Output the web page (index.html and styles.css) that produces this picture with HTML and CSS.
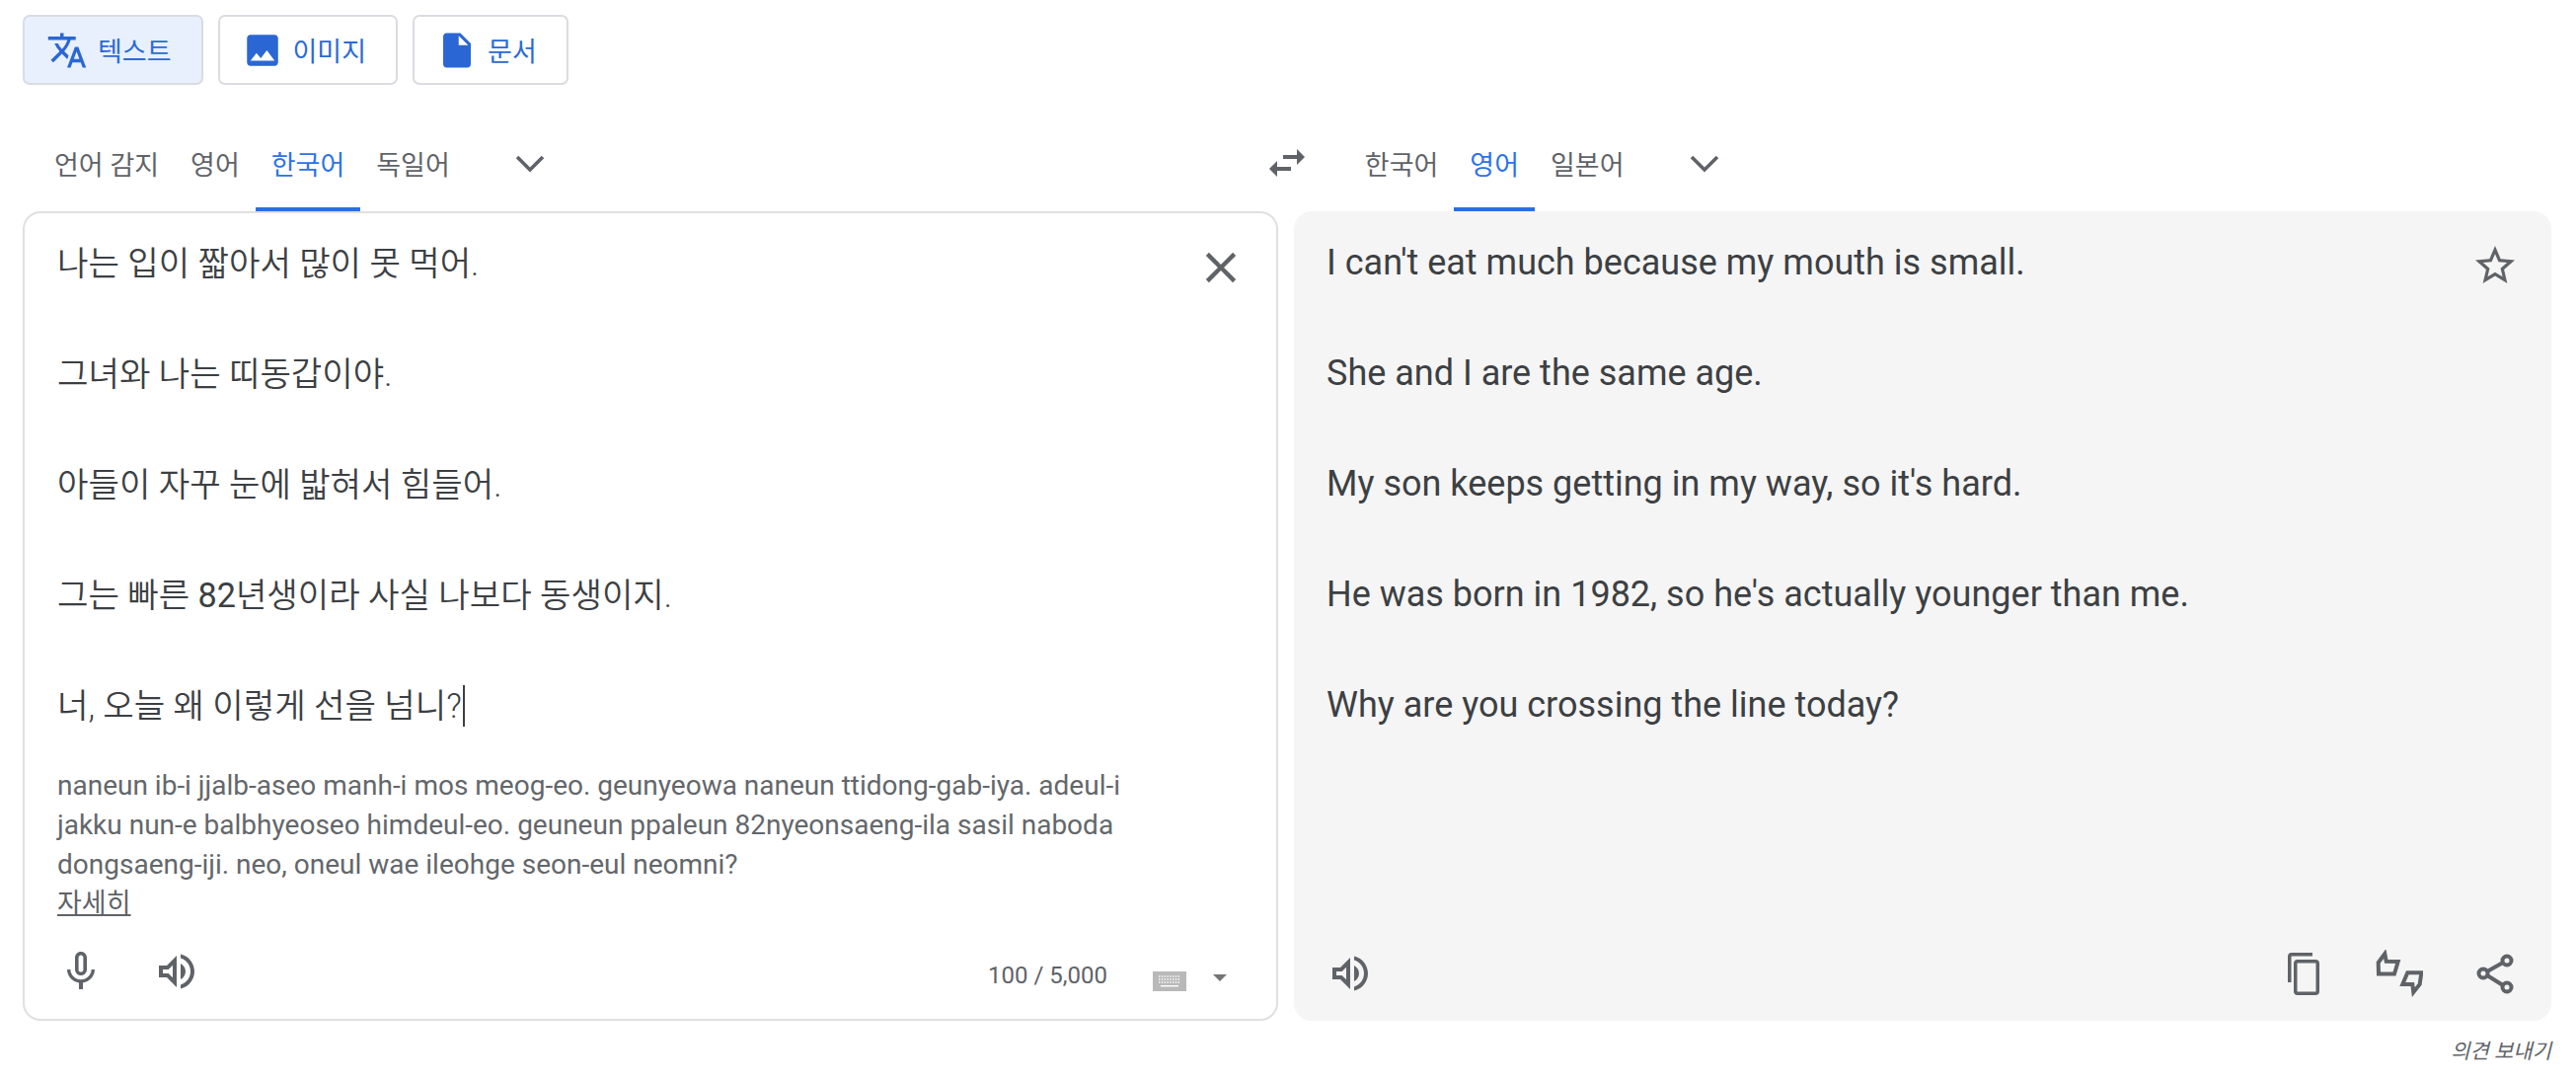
FILE: index.html
```html
<!DOCTYPE html>
<html lang="ko">
<head>
    <meta charset="UTF-8">
    <title>번역</title>
    <link rel="stylesheet" href="styles.css">
</head>
<body>
    <div class="page">
        <div class="modes">
            <div class="mode active">
                <svg class="mode-icon" viewBox="0 0 24 24"><path d="M12.87 15.07l-2.54-2.51.03-.03c1.74-1.94 2.98-4.17 3.71-6.53H17V4h-7V2H8v2H1v1.99h11.17C11.5 7.92 10.44 9.75 9 11.35 8.07 10.32 7.3 9.19 6.69 8h-2c.73 1.63 1.73 3.17 2.98 4.56l-5.09 5.02L4 19l5-5 3.11 3.11.76-2.04zM18.5 10h-2L12 22h2l1.12-3h4.75L21 22h2l-4.5-12zm-2.62 7l1.62-4.33L19.12 17h-3.24z"/></svg>
                <span>텍스트</span>
            </div>
            <div class="mode">
                <svg class="mode-icon" viewBox="0 0 24 24"><path d="M21 19V5c0-1.1-.9-2-2-2H5c-1.1 0-2 .9-2 2v14c0 1.1.9 2 2 2h14c1.1 0 2-.9 2-2zM8.5 13.5l2.5 3.01L14.5 12l4.5 6H5l3.5-4.5z"/></svg>
                <span>이미지</span>
            </div>
            <div class="mode">
                <svg class="mode-icon" viewBox="0 0 24 24"><path d="M6 2c-1.1 0-1.99.9-1.99 2L4 20c0 1.1.89 2 1.99 2H18c1.1 0 2-.9 2-2V8l-6-6H6zm7 7V3.5L18.5 9H13z"/></svg>
                <span>문서</span>
            </div>
        </div>

        <div class="lang-row">
            <div class="tab">언어 감지</div>
            <div class="tab">영어</div>
            <div class="tab selected">한국어</div>
            <div class="tab">독일어</div>
            <svg class="chevron" viewBox="0 0 48 48"><path d="M11 17l13 13 13-13"/></svg>
            <svg class="icon swap" viewBox="0 0 24 24"><path d="M6.99 11L3 15l3.99 4v-3H14v-2H6.99v-3zM21 9l-3.99-4v3H10v2h7.01v3L21 9z"/></svg>
            <div class="tab">한국어</div>
            <div class="tab selected">영어</div>
            <div class="tab">일본어</div>
            <svg class="chevron" viewBox="0 0 48 48"><path d="M11 17l13 13 13-13"/></svg>
        </div>

        <div class="panels">
            <div class="panel source">
                <div class="main-text">
                    <p>나는 입이 짧아서 많이 못 먹어.</p>
                    <p>그녀와 나는 띠동갑이야.</p>
                    <p>아들이 자꾸 눈에 밟혀서 힘들어.</p>
                    <p>그는 빠른 <span class="digits">82</span>년생이라 사실 나보다 동생이지.</p>
                    <p>너, 오늘 왜 이렇게 선을 넘니?<span class="caret-line"></span></p>
                </div>
                <svg class="close" viewBox="0 0 24 24"><path d="M19 6.41L17.59 5 12 10.59 6.41 5 5 6.41 10.59 12 5 17.59 6.41 19 12 13.41 17.59 19 19 17.59 13.41 12z"/></svg>
                <div class="roman">naneun ib-i jjalb-aseo manh-i mos meog-eo. geunyeowa naneun ttidong-gab-iya. adeul-i jakku nun-e balbhyeoseo himdeul-eo. geuneun ppaleun 82nyeonsaeng-ila sasil naboda dongsaeng-iji. neo, oneul wae ileohge seon-eul neomni?</div>
                <div class="more">자세히</div>
                <div class="panel-foot">
                    <svg class="icon" viewBox="0 0 24 24"><path d="M12 14c1.66 0 3-1.34 3-3V5c0-1.66-1.34-3-3-3S9 3.34 9 5v6c0 1.66 1.34 3 3 3zm-1.2-9.1c0-.66.54-1.2 1.2-1.2.66 0 1.2.54 1.2 1.2l-.01 6.2c0 .66-.53 1.2-1.19 1.2-.66 0-1.2-.54-1.2-1.2V4.9zm6.5 6.1c0 3-2.54 5.1-5.3 5.1S6.7 14 6.7 11H5c0 3.41 2.72 6.23 6 6.72V21h2v-3.28c3.28-.48 6-3.3 6-6.72h-1.7z"/></svg>
                    <svg class="icon" viewBox="0 0 24 24"><path d="M3 9v6h4l5 5V4L7 9H3zm7-.17v6.34L7.83 13H5v-2h2.83L10 8.83zM16.5 12c0-1.77-1.02-3.29-2.5-4.03v8.05c1.48-.73 2.5-2.25 2.5-4.02zM14 3.23v2.06c2.89.86 5 3.54 5 6.71s-2.11 5.85-5 6.71v2.06c4.01-.91 7-4.49 7-8.77 0-4.28-2.99-7.86-7-8.77z"/></svg>
                    <div class="count">100 / 5,000</div>
                    <svg class="keyboard" viewBox="0 0 34 20">
                        <rect width="34" height="20" fill="#b9b9b9"/>
                        <path d="M6 5h22M6 8h22M6 11h22" stroke="#fff" stroke-width="1.3" stroke-dasharray="1.4 1.4"/>
                        <rect x="8" y="14" width="18" height="1.4" fill="#fff"/>
                    </svg>
                    <div class="kb-caret"></div>
                </div>
            </div>
            <div class="panel target">
                <div class="main-text">
                    <p>I can't eat much because my mouth is small.</p>
                    <p>She and I are the same age.</p>
                    <p>My son keeps getting in my way, so it's hard.</p>
                    <p>He was born in 1982, so he's actually younger than me.</p>
                    <p>Why are you crossing the line today?</p>
                </div>
                <svg class="icon star" viewBox="0 0 24 24"><path d="M22 9.24l-7.19-.62L12 2 9.19 8.63 2 9.24l5.46 4.73L5.82 21 12 17.27 18.18 21l-1.63-7.03L22 9.24zM12 15.4l-3.76 2.27 1-4.28-3.32-2.88 4.38-.38L12 6.1l1.71 4.04 4.38.38-3.32 2.88 1 4.28L12 15.4z"/></svg>
                <div class="panel-foot">
                    <svg class="icon" viewBox="0 0 24 24"><path d="M3 9v6h4l5 5V4L7 9H3zm7-.17v6.34L7.83 13H5v-2h2.83L10 8.83zM16.5 12c0-1.77-1.02-3.29-2.5-4.03v8.05c1.48-.73 2.5-2.25 2.5-4.02zM14 3.23v2.06c2.89.86 5 3.54 5 6.71s-2.11 5.85-5 6.71v2.06c4.01-.91 7-4.49 7-8.77 0-4.28-2.99-7.86-7-8.77z"/></svg>
                    <div class="foot-right">
                        <svg class="icon" viewBox="0 0 48 48"><path d="M33 3H12a4 4 0 0 0-4 4v26h3.500V6.500H33zM36 10H18a4 4 0 0 0-4 4v28a4 4 0 0 0 4 4h18a4 4 0 0 0 4-4V14a4 4 0 0 0-4-4zm.5 32.500h-19v-29h19z"/></svg>
                        <svg class="icon rate" viewBox="0 0 48 48"><path d="M2.700 13L9.300 4l1.400 7.700 12 .3L19 24.500H3zM27.300 35l5-11.700h14l-1.600 11.700-6.400 8-1-8z"/></svg>
                        <svg class="icon share" viewBox="0 0 48 48"><circle cx="36" cy="11" r="4.500"/><circle cx="12" cy="24" r="4.500"/><circle cx="36" cy="38" r="4.500"/><path d="M16 22l16-9M16 26l16 10"/></svg>
                    </div>
                </div>
            </div>
        </div>

        <div class="feedback">의견 보내기</div>
    </div>
</body>
</html>
```

FILE: styles.css
```css
*{
    box-sizing: border-box;
}
html,body{
    margin: 0;
    height: 100%;
    overflow: hidden;
    background: #fff;
}
body{
    font-family: Roboto, "Noto Sans CJK KR", sans-serif;
    color: #3c4043;
}
.page{
    padding: 15px 25px 0 23px;
}

/* top buttons */
.modes{
    display: flex;
    gap: 15px;
}
.mode{
    height: 71px;
    padding: 0 30px 0 22px;
    display: flex;
    align-items: center;
    gap: 10px;
    border: 2px solid #dadce0;
    border-radius: 7px;
    font-size: 27px;
    color: #2b6ad6;
}
.mode.active{
    background: #e8f0fe;
}
.mode-icon{
    width: 42px;
    height: 42px;
    fill: #2b67d4;
}

/* language tabs */
.lang-row{
    height: 94px;
    margin-top: 34px;
    padding-left: 16px;
    display: flex;
    align-items: stretch;
}
.tab{
    padding: 0 16px;
    display: flex;
    align-items: center;
    font-size: 27px;
    color: #5f6368;
    border-bottom: 4px solid transparent;
}
.tab.selected{
    color: #2b73e8;
    border-bottom-color: #2b6fe3;
}
.chevron{
    width: 48px;
    height: 48px;
    margin: 22px 0 0 41px;
    fill: none;
    stroke: #5f6368;
    stroke-width: 3.6;
}
.icon{
    width: 48px;
    height: 48px;
    fill: #5f6368;
    flex: none;
}
.swap{
    margin: 21px 39px 0 719px;
}
.rate{
    fill: none;
    stroke: #5f6368;
    stroke-width: 4;
    stroke-miterlimit: 8;
}
.share{
    fill: none;
    stroke: #5f6368;
    stroke-width: 4;
}

/* text panels */
.panels{
    display: grid;
    grid-template-columns: 1272px 1274px;
    gap: 16px;
}
.panel{
    position: relative;
    height: 820px;
    padding: 24px 33px;
    display: flex;
    flex-direction: column;
    border-radius: 18px;
}
.source{
    padding: 22px 50px 24px 33px;
    border: 2px solid #e0e0e0;
}
.target{
    background: #f5f5f5;
}
.main-text{
    font-size: 36px;
    line-height: 56px;
}
.main-text p{
    margin: 0 0 56px;
}
.main-text p:last-child{
    margin-bottom: 0;
}
.source .main-text{
    font-size: 34.2px;
    font-weight: 350;
    padding-top: 1px;
}
.digits{
    font-weight: 400;
}
.caret-line{
    display: inline-block;
    width: 2px;
    height: 42px;
    margin-left: 1px;
    vertical-align: -9px;
    background: #3c4043;
}
.close{
    position: absolute;
    top: 29px;
    right: 30px;
    width: 52px;
    height: 52px;
    fill: #5f6368;
}
.star{
    position: absolute;
    top: 31px;
    right: 33px;
}
.roman{
    width: 1100px;
    margin-top: 33px;
    font-size: 28px;
    line-height: 40px;
    color: #63676b;
}
.more{
    margin-top: -1px;
    font-size: 27px;
    line-height: 40px;
    color: #5f6368;
    text-decoration: underline;
}
.panel-foot{
    margin-top: auto;
    display: flex;
    align-items: center;
    height: 48px;
}
.source .panel-foot .icon + .icon{
    margin-left: 49px;
}
.count{
    margin-left: auto;
    padding-top: 8px;
    font-size: 24px;
    color: #5f6368;
}
.keyboard{
    width: 34px;
    height: 20px;
    margin: 20px 0 0 46px;
}
.kb-caret{
    width: 0;
    height: 0;
    margin: 12px 0 0 27px;
    border-left: 7px solid transparent;
    border-right: 7px solid transparent;
    border-top: 7px solid #757575;
}
.foot-right{
    margin-left: auto;
    display: flex;
    gap: 49px;
}
.feedback{
    margin-top: 14px;
    text-align: right;
    font-size: 21px;
    font-style: italic;
    color: #5f6368;
}
```
